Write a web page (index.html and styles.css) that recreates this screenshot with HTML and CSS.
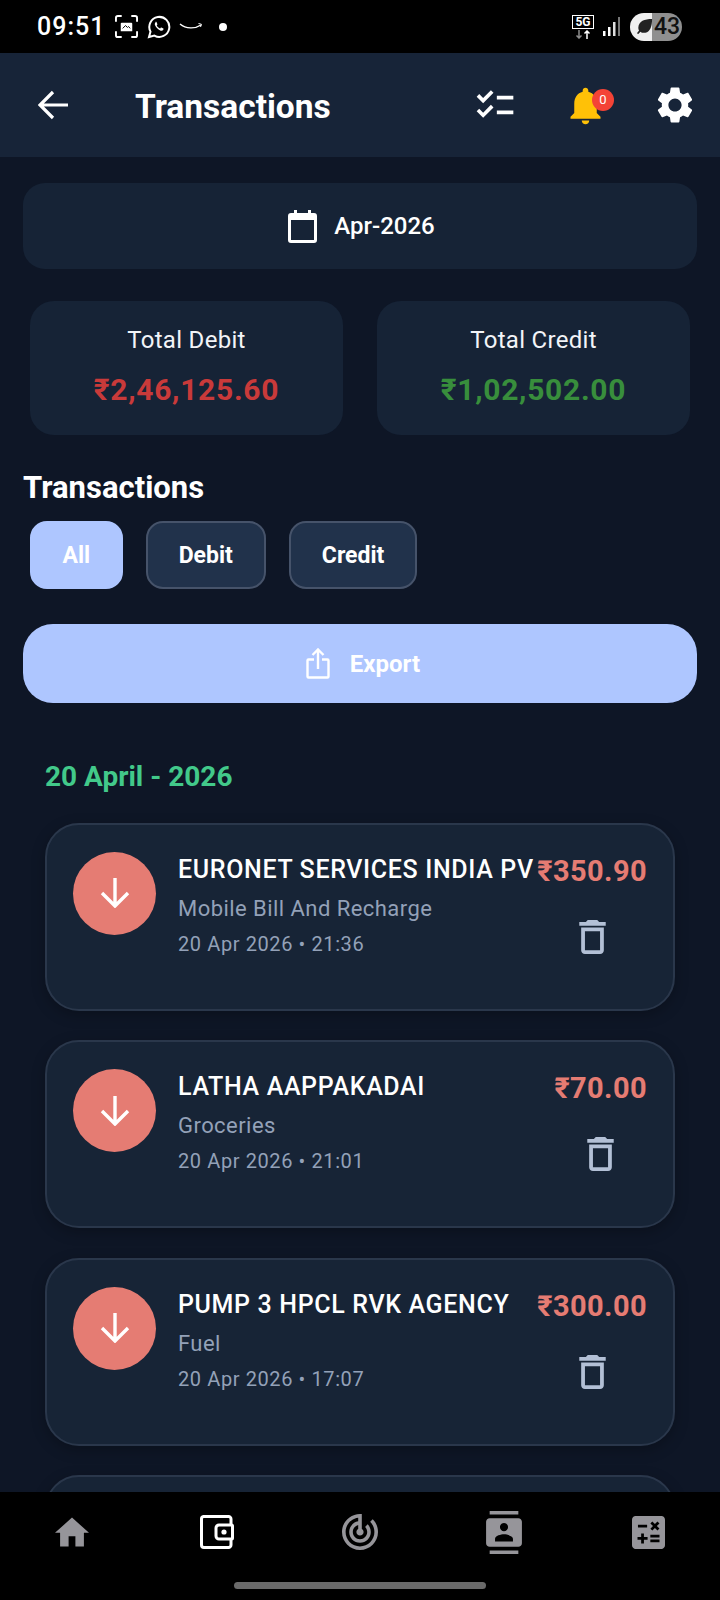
FILE: index.html
```html
<!DOCTYPE html>
<html lang="en">
<head>
    <meta charset="UTF-8">
    <meta name="viewport" content="width=device-width, initial-scale=1.0">
    <title>Transactions</title>
    <link rel="stylesheet" href="styles.css">
</head>
<body>
    <div class="screen">
        <!-- Status bar -->
        <div class="status-bar">
            <span class="clock">09:51</span>
            <svg class="st-shot" viewBox="0 0 24 24" fill="none" stroke="#fff" stroke-width="2"><path d="M1 7V3a2 2 0 0 1 2-2h4M17 1h4a2 2 0 0 1 2 2v4M23 17v4a2 2 0 0 1-2 2h-4M7 23H3a2 2 0 0 1-2-2v-4"/><path d="M6 17v-8a1 1 0 0 1 1-1h10a1 1 0 0 1 1 1v8z" fill="#fff" stroke="none"/><path d="M8 14l3-3 2 2 1-1 2 2" stroke="#000" stroke-width="1"/></svg>
            <svg class="st-wa" viewBox="0 0 24 24" fill="none" stroke="#fff" stroke-width="2"><path d="M2 22l1.500-5.400A10 10 0 1 1 7.400 20.600z"/><path d="M8.600 7.200c-.9.8-1 2-.4 3.400.9 2 2.800 4 5 4.900 1.300.5 2.500.2 3.100-.8.300-.6.300-1 .1-1.200l-2-1c-.4-.1-.6.1-.8.4l-.5.6c-1.500-.6-2.700-1.700-3.400-3.100l.5-.6c.2-.3.300-.5.100-.8l-.8-1.900c-.2-.4-.5-.5-.9-.4z" fill="#fff" stroke="none"/></svg>
            <svg class="st-amz" viewBox="0 0 24 10" fill="none" stroke="#fff" stroke-width="1.400"><path d="M1 2c6 5 15 5 21 1"/><path d="M19.500 1.500l3 .8-1 2.700" stroke-width="1"/></svg>
            <span class="st-dot"></span>
            <span class="st-spacer"></span>
            <div class="st-net">
                <span class="st-5g">5G</span>
                <svg viewBox="0 0 22 9" fill="none" stroke-width="1.500"><path d="M7 0v8M4.500 5.500L7 8l2.500-2.500" stroke="#8d8d8d"/><path d="M15 9V1M12.500 3.500L15 1l2.500 2.500" stroke="#fff"/></svg>
            </div>
            <svg class="st-signal" viewBox="0 0 18 20"><rect x="0" y="14" width="2.500" height="5" fill="#fff"/><rect x="5" y="10" width="2.500" height="9" fill="#fff"/><rect x="10" y="5" width="2.500" height="14" fill="#ddd"/><rect x="15" y="0" width="2" height="19" fill="#777"/></svg>
            <div class="st-battery">
                <svg viewBox="0 0 20 20"><path d="M18 2C10 2 4 4 3.500 11c0 1.500.3 2.500.8 3.300L2 17l1.500 1 2.200-2.600C7 16.500 9 17 11 16.500c5-1.200 7-7 7-14.500z" fill="#222"/></svg>
                <span>43</span>
            </div>
        </div>

        <!-- App bar -->
        <header class="app-bar">
            <svg class="ic-back" viewBox="0 0 30 30" fill="none" stroke="#fff" stroke-width="3.200"><path d="M30 15H2M15 2L2 15l13 13"/></svg>
            <h1 class="bar-title">Transactions</h1>
            <svg class="ic-check" viewBox="0 0 24 24" fill="#fff"><path d="M22 7h-9v2h9V7zm0 8h-9v2h9v-2zM5.540 11L2 7.460l1.410-1.410 2.120 2.120 4.240-4.240 1.410 1.410L5.540 11zm0 8L2 15.460l1.410-1.410 2.120 2.120 4.240-4.240 1.410 1.410L5.540 19z"/></svg>
            <div class="bell">
                <svg viewBox="0 0 24 24" fill="#ffc107"><path d="M12 22c1.100 0 2-.9 2-2h-4c0 1.100.89 2 2 2zm6-6v-5c0-3.070-1.640-5.640-4.500-6.320V4c0-.83-.67-1.500-1.500-1.500s-1.500.67-1.500 1.500v.68C7.630 5.360 6 7.920 6 11v5l-2 2v1h16v-1l-2-2z"/></svg>
                <span class="bell-badge">0</span>
            </div>
            <svg class="ic-gear" viewBox="0 0 24 24" fill="#fff"><path d="M19.140 12.940c.04-.3.06-.61.06-.94 0-.32-.02-.64-.07-.94l2.030-1.580c.18-.14.23-.41.12-.61l-1.920-3.320c-.12-.22-.37-.29-.59-.22l-2.390.96c-.5-.38-1.030-.7-1.620-.94l-.36-2.540c-.04-.24-.24-.41-.48-.41h-3.840c-.24 0-.43.17-.47.41l-.36 2.540c-.59.24-1.130.57-1.620.94l-2.390-.96c-.22-.08-.47 0-.59.22L2.740 8.870c-.12.21-.08.47.12.61l2.030 1.580c-.05.3-.09.63-.09.94s.02.64.07.94l-2.030 1.580c-.18.14-.23.41-.12.61l1.920 3.320c.12.22.37.29.59.22l2.390-.96c.5.38 1.030.7 1.620.94l.36 2.540c.05.24.24.41.48.41h3.840c.24 0 .44-.17.47-.41l.36-2.540c.59-.24 1.130-.56 1.620-.94l2.390.96c.22.08.47 0 .59-.22l1.920-3.320c.12-.22.07-.47-.12-.61l-2.010-1.580zM12 15.600c-1.980 0-3.600-1.620-3.600-3.600s1.620-3.600 3.600-3.600 3.600 1.620 3.600 3.600-1.620 3.600-3.600 3.600z"/></svg>
        </header>

        <main class="content">
            <div class="month-picker">
                <svg viewBox="0 0 29 33" fill="#fff"><path d="M6 0h3v3h11V0h3v3h3a3 3 0 0 1 3 3v24a3 3 0 0 1-3 3H3a3 3 0 0 1-3-3V6a3 3 0 0 1 3-3h3zM3 10v20h23V10z"/></svg>
                <span>Apr-2026</span>
            </div>

            <div class="totals">
                <div class="total-card">
                    <div class="total-label">Total Debit</div>
                    <div class="total-value debit">₹2,46,125.60</div>
                </div>
                <div class="total-card">
                    <div class="total-label">Total Credit</div>
                    <div class="total-value credit">₹1,02,502.00</div>
                </div>
            </div>

            <h2 class="section-title">Transactions</h2>
            <div class="filters">
                <button class="chip active">All</button>
                <button class="chip">Debit</button>
                <button class="chip">Credit</button>
            </div>

            <button class="export-btn">
                <svg viewBox="0 0 24 31" fill="none" stroke="#fff" stroke-width="2.400"><path d="M8 11.500H2.500a1 1 0 0 0-1 1v16a1 1 0 0 0 1 1h19a1 1 0 0 0 1-1v-16a1 1 0 0 0-1-1H16"/><path d="M12 21V2M6.500 7L12 1.500 17.500 7"/></svg>
                <span>Export</span>
            </button>

            <div class="date-label">20 April - 2026</div>

            <div class="tx-card">
                <div class="tx-icon"><svg viewBox="0 0 30 30" fill="none" stroke="#fff" stroke-width="3.400"><path d="M15 0v28M2 15l13 13 13-13"/></svg></div>
                <div class="tx-info">
                    <div class="tx-name">EURONET SERVICES INDIA PV</div>
                    <div class="tx-cat">Mobile Bill And Recharge</div>
                    <div class="tx-date">20 Apr 2026 • 21:36</div>
                </div>
                <div class="tx-side">
                    <div class="tx-amount">₹350.90</div>
                    <svg class="ic-trash" viewBox="5 3 14 18" fill="#b3c0d6"><path d="M6 19c0 1.100.9 2 2 2h8c1.100 0 2-.9 2-2V7H6v12zM8 9h8v10H8V9zm7.500-5l-1-1h-5l-1 1H5v2h14V4h-3.500z"/></svg>
                </div>
            </div>

            <div class="tx-card">
                <div class="tx-icon"><svg viewBox="0 0 30 30" fill="none" stroke="#fff" stroke-width="3.400"><path d="M15 0v28M2 15l13 13 13-13"/></svg></div>
                <div class="tx-info">
                    <div class="tx-name">LATHA AAPPAKADAI</div>
                    <div class="tx-cat">Groceries</div>
                    <div class="tx-date">20 Apr 2026 • 21:01</div>
                </div>
                <div class="tx-side">
                    <div class="tx-amount">₹70.00</div>
                    <svg class="ic-trash" viewBox="5 3 14 18" fill="#b3c0d6"><path d="M6 19c0 1.100.9 2 2 2h8c1.100 0 2-.9 2-2V7H6v12zM8 9h8v10H8V9zm7.500-5l-1-1h-5l-1 1H5v2h14V4h-3.500z"/></svg>
                </div>
            </div>

            <div class="tx-card">
                <div class="tx-icon"><svg viewBox="0 0 30 30" fill="none" stroke="#fff" stroke-width="3.400"><path d="M15 0v28M2 15l13 13 13-13"/></svg></div>
                <div class="tx-info">
                    <div class="tx-name">PUMP 3 HPCL RVK AGENCY</div>
                    <div class="tx-cat">Fuel</div>
                    <div class="tx-date">20 Apr 2026 • 17:07</div>
                </div>
                <div class="tx-side">
                    <div class="tx-amount">₹300.00</div>
                    <svg class="ic-trash" viewBox="5 3 14 18" fill="#b3c0d6"><path d="M6 19c0 1.100.9 2 2 2h8c1.100 0 2-.9 2-2V7H6v12zM8 9h8v10H8V9zm7.500-5l-1-1h-5l-1 1H5v2h14V4h-3.500z"/></svg>
                </div>
            </div>

            <div class="tx-card"></div>
        </main>

        <!-- Bottom navigation -->
        <nav class="bottom-nav">
            <div class="nav-icons">
                <svg class="nav-home" viewBox="2 3 20 17" fill="#96959a"><path d="M10 20v-6h4v6h5v-8h3L12 3 2 12h3v8z"/></svg>
                <svg class="nav-wallet" viewBox="0 0 34 34" fill="none" stroke="#fff" stroke-width="3"><path d="M31 9V4a2.500 2.500 0 0 0-2.500-2.500h-25A2.500 2.500 0 0 0 1.500 4v26A2.500 2.500 0 0 0 4 32.500h24.500A2.500 2.500 0 0 0 31 30v-5"/><path d="M19 10h12.500a1 1 0 0 1 1 1v12a1 1 0 0 1-1 1H19a3 3 0 0 1-3-3v-8a3 3 0 0 1 3-3z"/><circle cx="24" cy="17" r="2.600" fill="#fff" stroke="none"/></svg>
                <svg class="nav-radar" viewBox="2 2 20 20" fill="#96959a"><path d="M19.070 4.930l-1.410 1.410C19.100 7.790 20 9.790 20 12c0 4.420-3.580 8-8 8s-8-3.580-8-8c0-4.080 3.050-7.440 7-7.930v2.020C8.160 6.570 6 9.030 6 12c0 3.310 2.690 6 6 6s6-2.690 6-6c0-1.660-.67-3.160-1.760-4.240l-1.410 1.410C15.550 9.900 16 10.900 16 12c0 2.210-1.790 4-4 4s-4-1.790-4-4c0-1.860 1.280-3.410 3-3.860v2.140c-.6.350-1 .98-1 1.720 0 1.100.9 2 2 2s2-.9 2-2c0-.74-.4-1.380-1-1.720V2h-1C6.480 2 2 6.480 2 12s4.480 10 10 10 10-4.480 10-10c0-2.760-1.120-5.260-2.930-7.070z"/></svg>
                <svg class="nav-contacts" viewBox="2 0 20 24" fill="#96959a"><path d="M20 0H4v2h16V0zM4 24h16v-2H4v2zM20 4H4c-1.100 0-2 .9-2 2v12c0 1.100.9 2 2 2h16c1.100 0 2-.9 2-2V6c0-1.100-.9-2-2-2zm-8 2.750c1.240 0 2.250 1.010 2.250 2.250s-1.010 2.250-2.250 2.250S9.750 10.240 9.750 9 10.760 6.750 12 6.750zM17 17H7v-1.500c0-1.670 3.330-2.500 5-2.500s5 .83 5 2.500V17z"/></svg>
                <svg class="nav-calc" viewBox="3 3 18 18" fill="#96959a"><path d="M19 3H5c-1.100 0-2 .9-2 2v14c0 1.100.9 2 2 2h14c1.100 0 2-.9 2-2V5c0-1.100-.9-2-2-2zm-5.970 4.060L14.090 6l1.410 1.410L16.910 6l1.060 1.060-1.410 1.410 1.410 1.410-1.060 1.060-1.410-1.400-1.410 1.410-1.060-1.060 1.410-1.410-1.410-1.420zm-6.780.66h5v1.500h-5v-1.500zM11.500 16h-2v2H8v-2H6v-1.500h2v-2h1.500v2h2V16zm6.500 1.250h-5v-1.500h5v1.500zm0-2.500h-5v-1.500h5v1.500z"/></svg>
            </div>
            <div class="home-pill"></div>
        </nav>
    </div>
</body>
</html>
```

FILE: styles.css
```css
* {
    margin: 0;
    padding: 0;
    box-sizing: border-box;
    font-family: 'Roboto', 'Liberation Sans', sans-serif;
}

body {
    background: #0e1626;
}

.screen {
    width: 720px;
    height: 1600px;
    display: flex;
    flex-direction: column;
    overflow: hidden;
}

/* Status bar */
.status-bar {
    height: 53px;
    flex: none;
    background: #000;
    display: flex;
    align-items: center;
    padding: 0 38px 0 37px;
    color: #fff;
}

.clock {
    font-size: 25px;
    font-weight: 500;
    letter-spacing: 1px;
    width: 78px;
}

.st-shot {
    width: 23px;
    height: 23px;
    margin-right: 9px;
}

.st-wa {
    width: 24px;
    height: 24px;
    margin-right: 8px;
}

.st-amz {
    width: 24px;
    height: 10px;
    margin-right: 16px;
}

.st-dot {
    width: 8px;
    height: 8px;
    border-radius: 50%;
    background: #fff;
}

.st-spacer {
    flex: 1;
}

.st-net {
    width: 22px;
    display: flex;
    flex-direction: column;
    margin-right: 9px;
}

.st-5g {
    font-size: 12px;
    font-weight: 700;
    line-height: 12px;
    height: 14px;
    border: 1px solid #fff;
    text-align: center;
}

.st-net svg {
    width: 22px;
    height: 9px;
    margin-top: 1px;
}

.st-signal {
    width: 18px;
    height: 20px;
    margin-right: 9px;
}

.st-battery {
    width: 52px;
    height: 28px;
    border-radius: 14px;
    background: linear-gradient(90deg, #efefef 0, #efefef 42%, #8f8f8f 42%, #8f8f8f 100%);
    display: flex;
    align-items: center;
    padding-left: 5px;
    color: #111;
    font-size: 23px;
    font-weight: 500;
}

.st-battery svg {
    width: 19px;
    height: 19px;
    flex: none;
}

/* App bar */
.app-bar {
    height: 104px;
    flex: none;
    background: #172438;
    display: flex;
    align-items: center;
    padding-left: 38px;
}

.ic-back {
    width: 30px;
    height: 30px;
    flex: none;
}

.bar-title {
    font-size: 33.5px;
    line-height: 40px;
    font-weight: 700;
    color: #fff;
    margin: 3px 0 0 67px;
    width: 338px;
}

.ic-check {
    width: 44px;
    height: 44px;
    flex: none;
}

.bell {
    position: relative;
    width: 45px;
    height: 45px;
    margin-left: 46px;
}

.bell svg {
    width: 45px;
    height: 45px;
}

.bell-badge {
    position: absolute;
    left: 29px;
    top: 6px;
    width: 22px;
    height: 22px;
    border-radius: 50%;
    background: #f44336;
    color: #fff;
    font-size: 13px;
    line-height: 22px;
    text-align: center;
}

.ic-gear {
    width: 44px;
    height: 44px;
    flex: none;
    margin-left: 45px;
}

/* Content */
.content {
    flex: 1;
    min-height: 0;
    overflow: hidden;
    padding: 26px 23px 0;
}

.month-picker {
    height: 86px;
    padding-left: 3px;
    background: #162336;
    border-radius: 22px;
    display: flex;
    align-items: center;
    justify-content: center;
    gap: 17px;
    color: #fff;
    font-size: 24px;
    font-weight: 500;
}

.month-picker svg {
    width: 29px;
    height: 33px;
}

.totals {
    display: grid;
    grid-template-columns: 1fr 1fr;
    gap: 34px;
    margin: 32px 7px 0;
}

.total-card {
    height: 134px;
    background: #162336;
    border-radius: 24px;
    text-align: center;
    padding-top: 24px;
}

.total-label {
    font-size: 24px;
    line-height: 30px;
    letter-spacing: 0.3px;
    color: #f2f4f8;
}

.total-value {
    font-size: 30px;
    line-height: 40px;
    font-weight: 700;
    margin-top: 15px;
    letter-spacing: 0.7px;
}

.total-value.debit {
    color: #c93a3a;
}

.total-value.credit {
    color: #388e3c;
}

.section-title {
    font-size: 31px;
    line-height: 36px;
    font-weight: 700;
    color: #fff;
    margin-top: 35px;
}

.filters {
    display: flex;
    gap: 23px;
    margin: 15px 7px 0;
}

.chip {
    height: 68px;
    padding: 0 31px;
    border-radius: 17px;
    border: 2px solid #46536a;
    background: #21324b;
    color: #fff;
    font-size: 23px;
    font-weight: 700;
}

.chip.active {
    padding: 0 30.5px;
    background: #aec6ff;
    border-color: #aec6ff;
}

.export-btn {
    width: 100%;
    height: 79px;
    margin-top: 35px;
    padding-left: 6px;
    border: none;
    border-radius: 30px;
    background: #aec6ff;
    color: #fff;
    font-size: 24px;
    font-weight: 700;
    display: flex;
    align-items: center;
    justify-content: center;
    gap: 20px;
}

.export-btn svg {
    width: 24px;
    height: 31px;
}

.date-label {
    font-size: 28px;
    line-height: 30px;
    font-weight: 700;
    color: #42c98a;
    margin: 58.6px 0 0 22px;
}

/* Transaction cards */
.tx-card {
    height: 188px;
    margin: 31.4px 22px -2px;
    background: #172436;
    border: 2px solid #2a374b;
    border-radius: 34px;
    box-shadow: 0 4px 14px rgba(0, 0, 0, 0.25);
    display: flex;
    align-items: flex-start;
    padding: 27px 26px 0;
}

.tx-icon {
    width: 83px;
    height: 83px;
    flex: none;
    border-radius: 50%;
    background: #e57c73;
    display: flex;
    align-items: center;
    justify-content: center;
}

.tx-icon svg {
    width: 30px;
    height: 30px;
}

.tx-info {
    flex: 1;
    min-width: 0;
    margin: 3px 0 0 22px;
}

.tx-name {
    font-size: 25px;
    line-height: 30px;
    font-weight: 500;
    color: #fff;
    letter-spacing: 0.65px;
    white-space: nowrap;
}

.tx-cat {
    font-size: 22px;
    line-height: 28px;
    color: #93a1b8;
    margin-top: 10px;
    letter-spacing: 0.45px;
}

.tx-date {
    font-size: 20px;
    line-height: 28px;
    color: #93a1b8;
    margin-top: 7px;
    letter-spacing: 0.6px;
}

.tx-side {
    flex: none;
    display: flex;
    flex-direction: column;
    align-items: center;
    margin: 1px 0 0 4px;
}

.tx-amount {
    font-size: 29px;
    line-height: 36px;
    font-weight: 700;
    color: #e57c73;
    letter-spacing: 0.4px;
}

.ic-trash {
    width: 27px;
    height: 34px;
    margin-top: 31px;
}

/* Bottom navigation */
.bottom-nav {
    height: 108px;
    flex: none;
    background: #000;
    position: relative;
}

.nav-icons {
    display: flex;
    align-items: center;
    height: 62px;
    padding-top: 18px;
}

.nav-home {
    width: 34px;
    height: 30px;
    margin-left: 55px;
}

.nav-wallet {
    width: 34px;
    height: 34px;
    margin-left: 111px;
}

.nav-radar {
    width: 36px;
    height: 36px;
    margin-left: 108px;
}

.nav-contacts {
    width: 36px;
    height: 43px;
    margin-left: 108px;
}

.nav-calc {
    width: 33px;
    height: 33px;
    margin-left: 110px;
}

.home-pill {
    position: absolute;
    left: 234px;
    top: 90px;
    width: 252px;
    height: 7px;
    border-radius: 4px;
    background: #6a6a6a;
}
```
